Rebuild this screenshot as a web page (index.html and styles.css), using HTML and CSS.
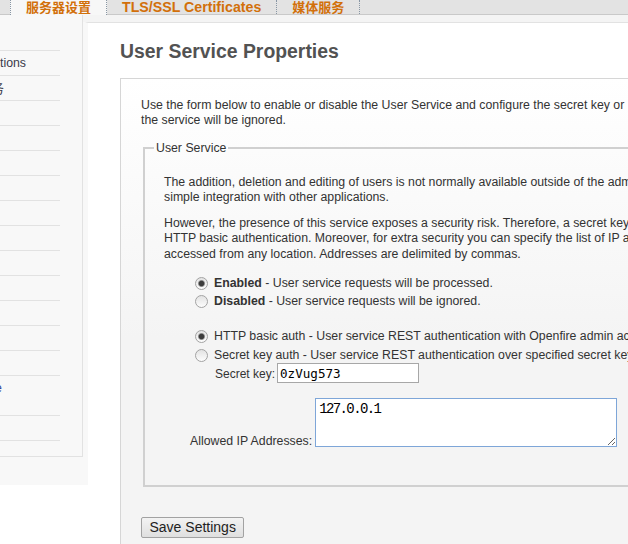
FILE: index.html
```html
<!DOCTYPE html>
<html lang="zh-CN">
<head>
<meta charset="utf-8">
<title>User Service Properties</title>
<link rel="stylesheet" href="styles.css">
</head>
<body>
<nav class="tabs">
  <a class="tab tab-active cjk">服务器设置</a>
  <a class="tab">TLS/SSL Certificates</a>
  <a class="tab cjk">媒体服务</a>
</nav>
<div class="layout">
  <aside class="sidebar">
    <ul class="nav">
      <li class="nav-head"></li>
      <li>tions</li>
      <li><span class="clip-cjk">务</span></li>
      <li></li>
      <li></li>
      <li></li>
      <li></li>
      <li></li>
      <li></li>
      <li></li>
      <li></li>
      <li></li>
      <li></li>
      <li></li>
      <li class="nav-tall"><span class="nav-current">e</span></li>
      <li></li>
    </ul>
  </aside>
  <main class="main">
    <div class="panel">
      <h1 class="title">User Service Properties</h1>
      <form class="box">
        <p class="intro">Use the form below to enable or disable the User Service and configure the secret key or HTTP basic authentication. By default the User Service plugin functionality is disabled, which means that any requests to<br>the service will be ignored.</p>
        <fieldset class="group">
          <legend>User Service</legend>
          <p class="first">The addition, deletion and editing of users is not normally available outside of the admin console. This service lets those administrative tasks be performed via HTTP requests to provide<br>simple integration with other applications.</p>
          <p>However, the presence of this service exposes a security risk. Therefore, a secret key is used to validate legitimate requests to this service, or<br>HTTP basic authentication. Moreover, for extra security you can specify the list of IP addresses that are allowed to use this service. An empty list means that the service can be<br>accessed from any location. Addresses are delimited by commas.</p>
          <div class="radios">
            <label class="radio-row"><input class="radio" type="radio" name="enabled" checked><span><b>Enabled</b> - User service requests will be processed.</span></label>
            <label class="radio-row"><input class="radio" type="radio" name="enabled"><span><b>Disabled</b> - User service requests will be ignored.</span></label>
          </div>
          <div class="radios radios-auth">
            <label class="radio-row"><input class="radio" type="radio" name="auth" checked><span>HTTP basic auth - User service REST authentication with Openfire admin account.</span></label>
            <label class="radio-row"><input class="radio" type="radio" name="auth"><span>Secret key auth - User service REST authentication over specified secret key.</span></label>
            <div class="key-row"><label class="key-label" for="secret">Secret key:</label><input class="text-input" id="secret" type="text" value="0zVug573"></div>
          </div>
          <div class="ip-row"><label class="ip-label" for="ips">Allowed IP Addresses:</label><textarea class="ip-area" id="ips">127.0.0.1</textarea></div>
        </fieldset>
        <button class="btn" type="button">Save Settings</button>
      </form>
    </div>
  </main>
</div>
</body>
</html>
```
FILE: styles.css
```css
html, body {
  margin: 0;
  padding: 0;
  overflow: hidden;
}
body {
  width: 628px;
  height: 544px;
  font-family: "Liberation Sans", Arial, sans-serif;
  font-size: 12.3px;
  line-height: 15.5px;
  color: #333;
  background: #fff;
}

/* top tabs */
.tabs {
  display: flex;
  height: 14px;
  padding-left: 10px;
  background: #e3e3e3;
  border-bottom: 1px solid #c9c9c9;
}
.tab {
  display: block;
  padding: 0 15px;
  border-right: 1px dotted #8896a4;
  font-weight: bold;
  font-size: 14.2px;
  line-height: 14px;
  color: #d2700a;
  white-space: nowrap;
}
.tab:first-child {
  border-left: 1px dotted #8896a4;
}
.tab-active {
  height: 15px;
  background: #f7f7f7;
}
.cjk {
  font-family: "Noto Sans CJK SC", sans-serif;
  font-size: 13px;
}

/* layout */
.layout {
  display: flex;
  align-items: flex-start;
}
.sidebar {
  flex: none;
  width: 88px;
  height: 470px;
  background: #f8f8f8;
}
.nav {
  list-style: none;
  margin: 0;
  padding: 0 0 15px;
  width: 82px;
  border-right: 1px solid #e2e2e2;
  border-bottom: 1px solid #e2e2e2;
}
.nav li {
  width: 60px;
  height: 24px;
  line-height: 24px;
  border-bottom: 1px solid #e2e2e2;
  white-space: nowrap;
  overflow: hidden;
  color: #3a3a4a;
}
.nav .nav-head {
  height: 35px;
}
.nav .nav-tall {
  height: 34px;
  padding-top: 5px;
  line-height: 15.5px;
}
.clip-cjk {
  font-family: "Noto Sans CJK SC", sans-serif;
  font-size: 13px;
  margin-left: -9px;
}
.nav-current {
  margin-left: -5px;
  color: #33489a;
}

.main {
  flex: 1;
  min-width: 0;
  margin-left: -5px;
  border-top: 7px solid #f4f4f4;
}
.panel {
  height: 521px;
  box-sizing: border-box;
  padding-left: 32px;
  border-top: 1px solid #e2e2e2;
  border-left: 5px solid transparent;
  border-top-left-radius: 5px;
  background: #fff;
  background-clip: padding-box;
}
.title {
  margin: 16px 0 15px;
  font-size: 19.4px;
  line-height: 24px;
  font-weight: bold;
  color: #525252;
  white-space: nowrap;
}

.box {
  display: block;
  width: 1000px;
  padding: 18.5px 20px 30px;
  border: 1px solid #d6d6d6;
  background: linear-gradient(#ffffff, #f4f4f4 260px);
}
.box p {
  margin: 0;
  white-space: nowrap;
}
.box .intro {
  margin-bottom: 12px;
}

.group {
  margin: 0 2px;
  padding: 0 19px 38px;
  border: 2px solid #d0d0d0;
  min-width: 0;
}
.group legend {
  padding: 0 2px;
  margin-left: -10px;
}
.group p.first {
  margin-top: 18.5px;
}
.group p + p {
  margin-top: 10px;
}

.radios {
  margin-top: 12.75px;
  margin-left: 31px;
}
.radios-auth {
  margin-top: 16.5px;
}
.radio-row {
  display: flex;
  align-items: center;
  gap: 6px;
  height: 18px;
  white-space: nowrap;
}
.radios-auth .radio-row {
  height: 19px;
}
.radio {
  appearance: none;
  -webkit-appearance: none;
  flex: none;
  width: 13px;
  height: 13px;
  margin: 0;
  box-sizing: border-box;
  border: 1px solid #a3a3a3;
  border-radius: 50%;
  background: linear-gradient(#e2e2e2, #fdfdfd);
}
.radio:checked {
  background:
    radial-gradient(circle, #3c3c3c 0 2.2px, #7e7e7e 2.9px, rgba(200,200,200,0) 3.9px),
    linear-gradient(#e2e2e2, #fdfdfd);
}

.key-row {
  display: flex;
  align-items: baseline;
  gap: 2px;
  margin-top: -2px;
  padding-left: 20px;
}
.key-label {
  font-size: 12px;
}
.text-input {
  width: 142px;
  height: 20px;
  box-sizing: border-box;
  margin: 0;
  padding: 0 2px;
  border: 1px solid #a7a7a7;
  background: #fff;
  font-family: "DejaVu Sans Mono", monospace;
  font-size: 12.6px;
  color: #000;
}

.ip-row {
  display: flex;
  align-items: flex-end;
  gap: 3px;
  margin-top: 14.5px;
  padding-left: 26px;
}
.ip-label {
  margin-bottom: -2.5px;
  white-space: nowrap;
}
.ip-area {
  width: 302px;
  height: 49px;
  box-sizing: border-box;
  margin: 0;
  padding: 2px 3px;
  border: 1px solid #7ea6d8;
  background: #fff;
  font-family: "Liberation Mono", monospace;
  font-size: 14px;
  letter-spacing: -1.6px;
  line-height: 16px;
  color: #000;
  resize: both;
}

.btn {
  display: block;
  margin-top: 30px;
  height: 21px;
  padding: 0 7.5px;
  border: 1px solid #a2a2a2;
  border-radius: 2px;
  background: linear-gradient(#f3f3f3, #dfdfdf);
  font-family: "Liberation Sans", Arial, sans-serif;
  font-size: 14px;
  line-height: 19px;
  color: #222;
}
```
